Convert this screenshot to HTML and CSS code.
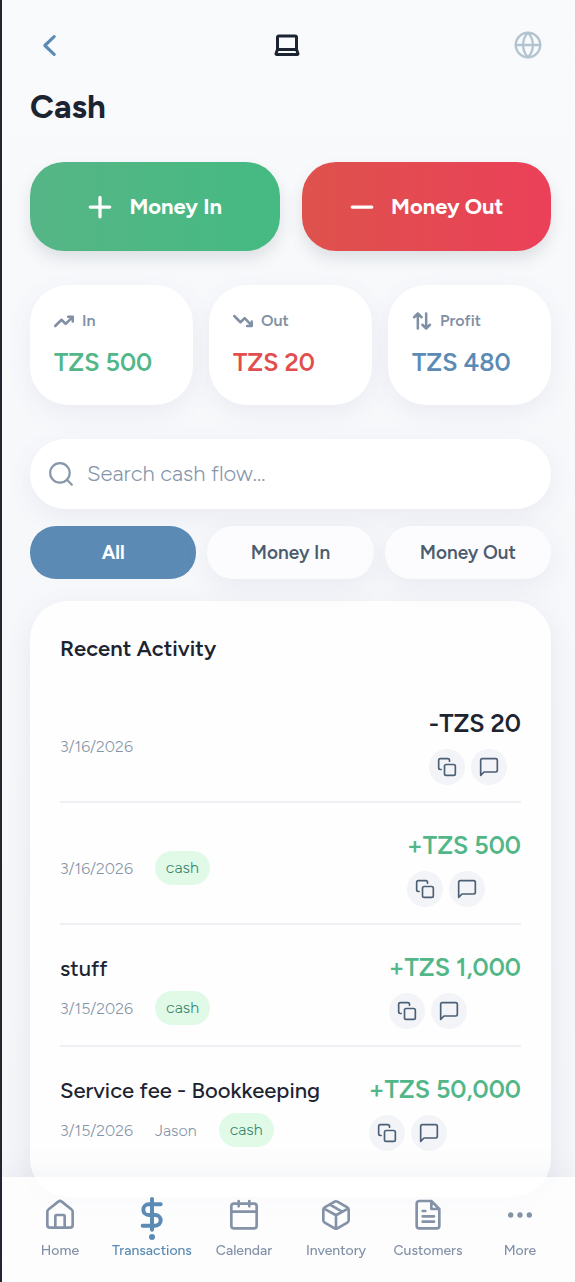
FILE: index.html
```html
<!DOCTYPE html>
<html lang="en">
<head>
<meta charset="utf-8">
<meta name="viewport" content="width=device-width, initial-scale=1">
<title>Cash</title>
<link rel="stylesheet" href="styles.css">
</head>
<body>
<svg class="sprite" aria-hidden="true">
  <symbol id="copy" viewBox="0 0 24 24"><rect x="9" y="9" width="13" height="13" rx="2"/><path d="M5 15H4a2 2 0 0 1-2-2V4a2 2 0 0 1 2-2h9a2 2 0 0 1 2 2v1"/></symbol>
  <symbol id="message" viewBox="0 0 24 24"><path d="M22 16a2 2 0 0 1-2 2H6l-4 4V4a2 2 0 0 1 2-2h16a2 2 0 0 1 2 2z"/></symbol>
</svg>
<main class="page">
  <header class="topbar">
    <button class="icon-button back" aria-label="Back"><svg class="icon" viewBox="0 0 24 24"><path d="M16.500 3.500 7.500 12l9 8.500"/></svg></button>
    <button class="icon-button device" aria-label="Device"><svg class="icon" viewBox="0 0 28 24"><path d="M4.500 16.500V4.500A1.500 1.500 0 0 1 6 3h16a1.500 1.500 0 0 1 1.500 1.500v12zM4.500 16.500l-1.400 3.800a.8.8 0 0 0 .8 1.200h20.200a.8.8 0 0 0 .8-1.200l-1.400-3.800"/></svg></button>
    <button class="icon-button globe" aria-label="Language"><svg class="icon" viewBox="0 0 24 24"><circle cx="12" cy="12" r="10.500"/><path d="M1.500 12h21M12 1.500c3 3 4.200 6.800 4.200 10.500s-1.200 7.500-4.200 10.500c-3-3-4.200-6.800-4.200-10.500s1.200-7.500 4.200-10.500z"/></svg></button>
  </header>
  <h1 class="title">Cash</h1>

  <div class="actions">
    <button class="action action-in"><svg class="icon" viewBox="0 0 24 24"><path d="M12 3v18M3 12h18"/></svg>Money In</button>
    <button class="action action-out"><svg class="icon" viewBox="0 0 24 24"><path d="M3 12h18"/></svg>Money Out</button>
  </div>

  <section class="stats" aria-label="Totals">
    <div class="stat">
      <div class="stat-label"><svg class="icon" viewBox="0 0 24 24"><path d="m1.500 18 7.500-7.500 5 5L22 7.500M17 7h5.500v5.500"/></svg>In</div>
      <div class="stat-value green">TZS 500</div>
    </div>
    <div class="stat">
      <div class="stat-label"><svg class="icon" viewBox="0 0 24 24"><path d="m1.500 6 7.500 7.500 5-5 8 8.500M17 18h5.500v-5.500"/></svg>Out</div>
      <div class="stat-value red">TZS 20</div>
    </div>
    <div class="stat">
      <div class="stat-label"><svg class="icon" viewBox="0 0 24 24"><path d="M7 21V3M2.500 7.500 7 3l4.500 4.500M17 3v18M12.500 16.500 17 21l4.500-4.500"/></svg>Profit</div>
      <div class="stat-value blue">TZS 480</div>
    </div>
  </section>

  <label class="search">
    <svg class="icon" viewBox="0 0 24 24"><circle cx="11" cy="11" r="9"/><path d="m22 22-4.600-4.600"/></svg>
    <input class="search-input" type="text" placeholder="Search cash flow..." aria-label="Search cash flow">
  </label>

  <div class="filters">
    <button class="filter filter-active" aria-pressed="true">All</button>
    <button class="filter" aria-pressed="false">Money In</button>
    <button class="filter" aria-pressed="false">Money Out</button>
  </div>

  <section class="activity">
    <h2 class="activity-title">Recent Activity</h2>
    <ul class="rows">
      <li class="row">
        <div class="info"><div class="meta"><span>3/16/2026</span></div></div>
        <div class="side"><div class="amount">-TZS 20</div><div class="tools"><button class="tool" aria-label="Copy"><svg class="icon"><use href="#copy"/></svg></button><button class="tool" aria-label="Comment"><svg class="icon"><use href="#message"/></svg></button></div></div>
      </li>
      <li class="row">
        <div class="info"><div class="meta"><span>3/16/2026</span><span class="tag">cash</span></div></div>
        <div class="side"><div class="amount green">+TZS 500</div><div class="tools"><button class="tool" aria-label="Copy"><svg class="icon"><use href="#copy"/></svg></button><button class="tool" aria-label="Comment"><svg class="icon"><use href="#message"/></svg></button></div></div>
      </li>
      <li class="row">
        <div class="info"><div class="name">stuff</div><div class="meta"><span>3/15/2026</span><span class="tag">cash</span></div></div>
        <div class="side"><div class="amount green">+TZS 1,000</div><div class="tools"><button class="tool" aria-label="Copy"><svg class="icon"><use href="#copy"/></svg></button><button class="tool" aria-label="Comment"><svg class="icon"><use href="#message"/></svg></button></div></div>
      </li>
      <li class="row">
        <div class="info"><div class="name">Service fee - Bookkeeping</div><div class="meta"><span>3/15/2026</span><span>Jason</span><span class="tag">cash</span></div></div>
        <div class="side"><div class="amount green">+TZS 50,000</div><div class="tools"><button class="tool" aria-label="Copy"><svg class="icon"><use href="#copy"/></svg></button><button class="tool" aria-label="Comment"><svg class="icon"><use href="#message"/></svg></button></div></div>
      </li>
    </ul>
  </section>
</main>

<nav class="tabs" aria-label="Main">
  <a class="tab" href="#"><svg class="icon" viewBox="0 0 24 24"><path d="M2.500 9.500a2 2 0 0 1 .8-1.600L10.700 2a2 2 0 0 1 2.600 0l7.400 5.900a2 2 0 0 1 .8 1.600V19.500a2 2 0 0 1-2 2h-15a2 2 0 0 1-2-2zM8.500 21.500V13a1 1 0 0 1 1-1h5a1 1 0 0 1 1 1v8.500"/></svg>Home</a>
  <a class="tab tab-active" href="#" aria-current="page"><svg class="icon" viewBox="0 0 24 24"><path d="M12 0v23M18.500 4H9.500a4 4 0 0 0 0 8h5a4 4 0 0 1 0 8H5"/></svg>Transactions</a>
  <a class="tab" href="#"><svg class="icon" viewBox="0 0 24 24"><rect x="2.500" y="3.500" width="19" height="18.500" rx="2"/><path d="M8 1.500v4M16 1.500v4M2.500 9.500h19"/></svg>Calendar</a>
  <a class="tab" href="#"><svg class="icon" viewBox="0 0 24 24"><path d="m16.500 9.400-9-5.200M21.500 16V8a2 2 0 0 0-1-1.730l-7.500-4.300a2 2 0 0 0-2 0L3.500 6.270A2 2 0 0 0 2.500 8v8a2 2 0 0 0 1 1.730l7.500 4.300a2 2 0 0 0 2 0l7.500-4.300a2 2 0 0 0 1-1.730zM2.800 7 12 12.200 21.200 7M12 22.200v-10"/></svg>Inventory</a>
  <a class="tab" href="#"><svg class="icon" viewBox="0 0 24 24"><path d="M14.500 1.500H5.500a2 2 0 0 0-2 2v16.500a2 2 0 0 0 2 2h13a2 2 0 0 0 2-2V7.500zM14.500 1.500v6h6M8 9h2M8 13h8.500M8 17h8.500"/></svg>Customers</a>
  <a class="tab" href="#"><svg class="icon dots" viewBox="0 0 24 24"><circle cx="5" cy="12" r="2"/><circle cx="12" cy="12" r="2"/><circle cx="19" cy="12" r="2"/></svg>More</a>
</nav>
</body>
</html>
```
FILE: styles.css
```css
* { box-sizing: border-box; }

body {
  margin: 0;
  border-left: 2px solid #24252f;
  background: linear-gradient(#f9fafc, #f4f5f8);
  color: #1c2331;
  font-family: Figtree, Inter, "Liberation Sans", sans-serif;
}

button {
  border: 0;
  padding: 0;
  background: none;
  color: inherit;
  font: inherit;
  cursor: pointer;
}

.sprite { position: absolute; width: 0; height: 0; }

.icon {
  flex: none;
  width: 20px;
  height: 20px;
  fill: none;
  stroke: currentColor;
  stroke-width: 2;
  stroke-linecap: round;
  stroke-linejoin: round;
}

.green { color: #52b788; }
.red { color: #e24e4e; }
.blue { color: #5b8bb5; }

.page { padding: 24px 24px 85px 28px; }

.topbar {
  display: flex;
  align-items: center;
  justify-content: space-between;
}

.icon-button { display: grid; place-items: center; width: 46px; height: 42px; }
.icon-button .icon { width: 28px; height: 28px; }
.back { width: 38px; color: #5b8bb5; }
.back .icon { width: 25px; height: 25px; stroke-width: 3; }
.globe { color: #b2c4d0; }
.device { color: #1c2331; }
.device .icon { stroke-width: 3; }

.title {
  margin: 21px 0 35px;
  font-size: 33px;
  line-height: 40px;
  font-weight: 700;
}

.actions {
  display: grid;
  grid-template-columns: 1fr 1fr;
  gap: 22px;
  margin-bottom: 34px;
}

.action {
  display: flex;
  align-items: center;
  justify-content: center;
  gap: 16px;
  height: 89px;
  border-radius: 34px;
  color: #fff;
  font-size: 22px;
  font-weight: 700;
  box-shadow: 0 8px 16px rgba(40, 60, 70, .13);
}
.action .icon { width: 26px; height: 26px; stroke-width: 3; }
.action-in { background: linear-gradient(90deg, #56b586, #45ba82); }
.action-out { background: linear-gradient(90deg, #de524c, #eb4059); }

.stats {
  display: grid;
  grid-template-columns: repeat(3, 1fr);
  gap: 16px;
  margin-bottom: 34px;
}

.stat {
  height: 120px;
  padding: 24px;
  border-radius: 38px;
  background: #fff;
  box-shadow: 0 8px 26px rgba(90, 95, 150, .08);
}
.stat-label {
  display: flex;
  align-items: center;
  gap: 8px;
  color: #7f8fa4;
  font-size: 16px;
  line-height: 24px;
  font-weight: 600;
}
.stat-label .icon { stroke-width: 3; }
.stat-value {
  margin-top: 13px;
  font-size: 25px;
  line-height: 32px;
  font-weight: 600;
  white-space: nowrap;
}

.search {
  display: flex;
  align-items: center;
  gap: 13px;
  height: 70px;
  margin-bottom: 17px;
  padding: 0 18px;
  border-radius: 35px;
  background: #fff;
  color: #8796aa;
  box-shadow: 0 8px 26px rgba(90, 95, 150, .08);
}
.search .icon { width: 26px; height: 26px; }
.search-input {
  flex: 1;
  min-width: 0;
  border: 0;
  outline: 0;
  padding: 0;
  background: none;
  color: #1c2331;
  font: 300 22px/32px Figtree, Inter, "Liberation Sans", sans-serif;
}
.search-input::placeholder { color: #8796aa; opacity: 1; }

.filters {
  display: grid;
  grid-template-columns: repeat(3, 1fr);
  gap: 11px;
  margin-bottom: 22px;
}
.filter {
  height: 53px;
  border-radius: 26px;
  background: #fcfcfe;
  color: #4c5c6e;
  font-size: 19px;
  font-weight: 600;
  box-shadow: 0 8px 26px rgba(90, 95, 150, .08);
}
.filter-active { background: #5b8bb5; color: #fff; font-weight: 700; box-shadow: none; }

.activity {
  padding: 30px;
  border-radius: 38px;
  background: #fefefe;
  box-shadow: 0 8px 26px rgba(90, 95, 150, .1);
}
.activity-title {
  margin: 0 0 14px;
  font-size: 22px;
  line-height: 36px;
  font-weight: 600;
}

.rows { margin: 0; padding: 0; list-style: none; }
.row {
  display: flex;
  align-items: center;
  justify-content: space-between;
  padding: 26px 0 16px;
  border-bottom: 2px solid #eff0f4;
}
.row:last-child { border-bottom: 0; }

.name {
  margin-bottom: 8px;
  font-size: 22px;
  line-height: 28px;
  font-weight: 500;
}
.meta {
  display: flex;
  align-items: center;
  gap: 22px;
  min-height: 34px;
  color: #8494a8;
  font-size: 16px;
  font-weight: 300;
}
.tag {
  padding: 0 11px;
  border-radius: 17px;
  background: #e1fae8;
  color: #36856b;
  line-height: 34px;
}

.amount {
  font-size: 25px;
  line-height: 32px;
  font-weight: 600;
  white-space: nowrap;
}
.tools { display: flex; gap: 6px; margin-top: 10px; }
.tool {
  display: grid;
  place-items: center;
  width: 36px;
  height: 36px;
  border-radius: 50%;
  background: #f3f4f7;
  color: #4c5f75;
}

.tabs {
  position: fixed;
  right: 0;
  bottom: 0;
  left: 2px;
  display: grid;
  grid-template-columns: repeat(6, 1fr);
  height: 105px;
  padding: 22px 9px 0 12px;
  background: rgba(255, 255, 255, .8);
  box-shadow: 0 -8px 26px rgba(90, 95, 150, .06);
}
.tab {
  position: relative;
  display: flex;
  flex-direction: column;
  align-items: center;
  gap: 10px;
  color: #8392a7;
  font-size: 14px;
  line-height: 20px;
  font-weight: 500;
  text-decoration: none;
}
.tab .icon { width: 34px; height: 32px; }
.dots { fill: currentColor; stroke: none; }
.tab .dots { stroke: none; }
.tab-active { color: #5b8bb5; }
.tab-active .icon { stroke-width: 3; overflow: visible; }
.tab-active::after {
  content: "";
  position: absolute;
  top: 35px;
  width: 6px;
  height: 6px;
  border-radius: 50%;
  background: currentColor;
}
```
